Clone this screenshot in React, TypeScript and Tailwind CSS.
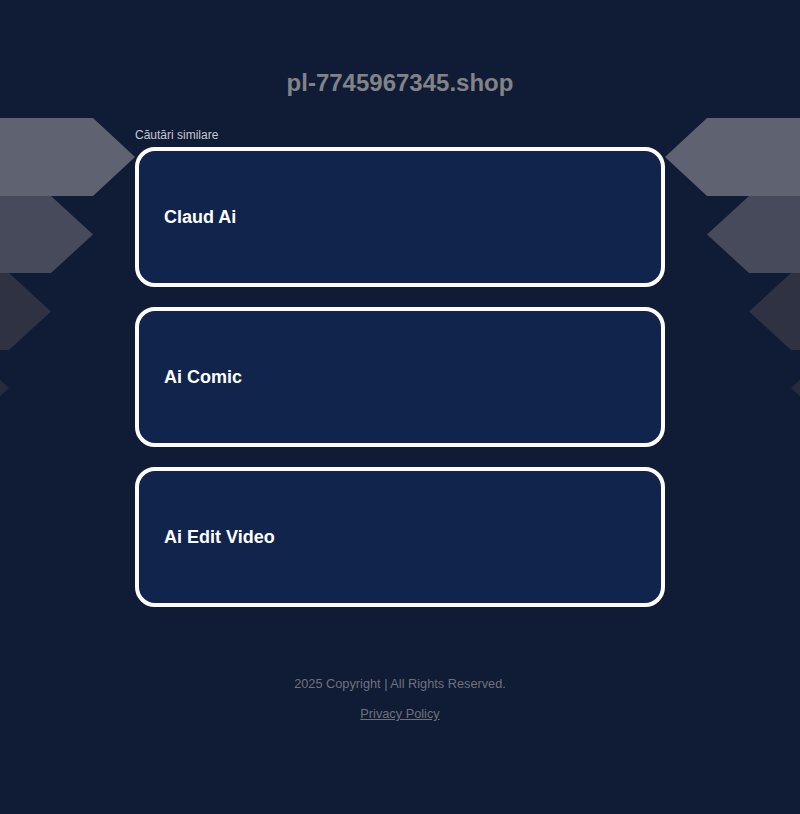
const searches = ["Claud Ai", "Ai Comic", "Ai Edit Video"];

const Arrows = ({ flip }: { flip?: boolean }) => (
    <svg
        width="135"
        height="320"
        viewBox="0 0 135 320"
        className={`absolute top-[118px] ${flip ? "right-0 -scale-x-100" : "left-0"}`}
    >
        <polygon points="0,0 93,0 135,39 93,78 0,78" fill="#5f6270" />
        <polygon points="0,78 51,78 93,116.5 51,155 0,155" fill="#464a5a" />
        <polygon points="0,155 9,155 51,193.5 9,232 0,232" fill="#2e3243" />
        <polygon points="0,261.5 9,270 0,278.5" fill="#262b3c" />
    </svg>
);

export default function App() {
    return (
        <div
            className="relative min-h-[814px] w-full overflow-hidden bg-[#101b35]"
            style={{ fontFamily: '"Liberation Sans", Arial, sans-serif' }}
        >
            <Arrows />
            <Arrows flip />

            <section className="relative mx-auto w-[530px] pt-[69px]">
                <h1 className="text-center text-[24px] font-bold leading-[28px] text-[#818386]">
                    pl-7745967345.shop
                </h1>

                <p className="mt-[31px] text-[12px] leading-[14px] text-[#c5c8ce]">Căutări similare</p>

                <div className="mt-[5px] flex flex-col gap-5">
                    {searches.map((s) => (
                        <a
                            key={s}
                            href="#"
                            className="flex h-[140px] items-center rounded-[20px] border-4 border-white bg-[#11244c] pl-[25px] text-[18px] font-bold text-white"
                        >
                            {s}
                        </a>
                    ))}
                </div>

                <footer className="mt-[69px] flex flex-col items-center gap-[15px] text-[12.75px] leading-[15px] text-[#6e727c]">
                    <p>2025 Copyright | All Rights Reserved.</p>
                    <a href="#" className="underline">Privacy Policy</a>
                </footer>
            </section>
        </div>
    );
}
